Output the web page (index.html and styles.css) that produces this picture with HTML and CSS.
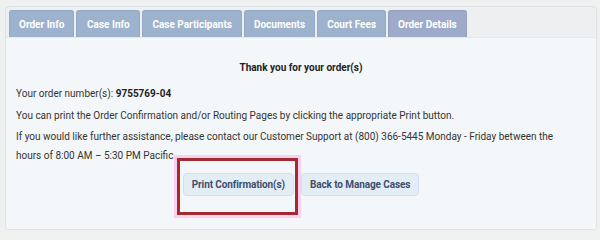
FILE: index.html
```html
<!DOCTYPE html>
<html>
<head>
<meta charset="utf-8">
<link rel="stylesheet" href="styles.css">
</head>
<body>
<div class="frame">
  <div class="tabs">
    <div class="tab">Order Info</div>
    <div class="tab">Case Info</div>
    <div class="tab">Case Participants</div>
    <div class="tab">Documents</div>
    <div class="tab">Court Fees</div>
    <div class="tab active">Order Details</div>
  </div>
  <div class="panel">
    <h2 class="title">Thank you for your order(s)</h2>
    <p class="line">Your order number(s): <b>9755769-04</b></p>
    <p class="line">You can print the Order Confirmation and/or Routing Pages by clicking the appropriate Print button.</p>
    <p class="line">If you would like further assistance, please contact our Customer Support at (800) 366-5445 Monday - Friday between the hours of 8:00 AM – 5:30 PM Pacific.</p>
    <div class="actions">
      <div class="marked">
        <button class="btn">Print Confirmation(s)</button>
        <span class="highlight"></span>
      </div>
      <button class="btn">Back to Manage Cases</button>
    </div>
  </div>
</div>
</body>
</html>
```
FILE: styles.css
```css
* { box-sizing: border-box; }
html, body { margin: 0; padding: 0; }
body {
  width: 600px;
  height: 234px;
  background: #eff0f0;
  font-family: Roboto, "Liberation Sans", sans-serif;
  color: #333;
  overflow: hidden;
  padding: 6px 3px 0 5px;
}
.frame {
  border: 1px solid #dde1e5;
  border-radius: 4px;
  background: #edeff1;
  height: 224px;
  display: flex;
  flex-direction: column;
  overflow: hidden;
}
.tabs {
  display: flex;
  gap: 2px;
  padding: 3px 3px 0 3px;
}
.tab {
  background: #9cb2cd;
  color: #fff;
  font-weight: 700;
  font-size: 10px;
  height: 27px;
  line-height: 27px;
  min-width: 64px;
  text-align: center;
  padding: 0 9px;
  border-radius: 3px 3px 0 0;
  border: 1px solid #93aac6;
  border-bottom: none;
}
.tab.active { background: #9eaaca; border-color: #949fc0; }
.panel {
  flex: 1;
  background: #f4f7f9;
  padding: 20px 20px 0 10px;
  border-top: 1px solid #e3e8ee;
}
.title {
  margin: 0 0 7px 0;
  text-align: center;
  font-size: 10px;
  font-weight: 700;
  line-height: 19px;
  color: #222;
  padding-left: 10px;
}
.line {
  margin: 0 0 2.5px 0;
  font-size: 10px;
  line-height: 19px;
}
.line b { color: #222; }
.actions {
  display: flex;
  justify-content: center;
  align-items: center;
  gap: 7px;
  margin-top: 8px;
  padding-left: 10px;
}
.marked { position: relative; display: flex; }
.highlight {
  position: absolute;
  left: -6px;
  right: -4px;
  top: -15px;
  bottom: -19px;
  border: 3px solid #a32a33;
  box-shadow: 0 0 0 3px #fbd0ec;
  pointer-events: none;
}
.btn {
  font-family: Roboto, "Liberation Sans", sans-serif;
  font-weight: 700;
  font-size: 10px;
  letter-spacing: -0.1px;
  color: #3e4f6d;
  background: #e3edf6;
  border: 1px solid #d2dfea;
  border-radius: 4px;
  height: 23px;
  padding: 0 8px;
  cursor: pointer;
}
```
